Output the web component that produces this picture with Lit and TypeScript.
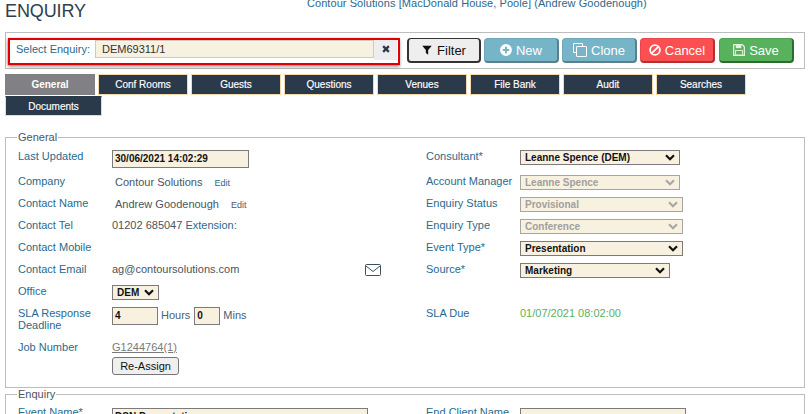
import { LitElement, html, css, svg } from "lit";
import { customElement } from "lit/decorators.js";

const tabs = ["Conf Rooms", "Guests", "Questions", "Venues", "File Bank", "Audit", "Searches"];

function chev(c: string) {
  return svg`<svg class="chev" width="10" height="7" viewBox="0 0 10 7"><path d="M1 1.2L5 5.2 9 1.2" fill="none" stroke="${c}" stroke-width="2.2"/></svg>`;
}

const leftRows = [
  { h: 25, label: "Last Updated", v: html`<span class="inp dt">30/06/2021 14:02:29</span>` },
  { h: 22, label: "Company", v: html`<span class="val in2">Contour Solutions</span><a class="edit e1">Edit</a>` },
  { h: 22, label: "Contact Name", v: html`<span class="val in2">Andrew Goodenough</span><a class="edit e2">Edit</a>` },
  { h: 22, label: "Contact Tel", v: html`<span class="val">01202 685047 <span class="ext">Extension:</span></span>` },
  { h: 22, label: "Contact Mobile", v: html`` },
  {
    h: 22,
    label: "Contact Email",
    v: html`<span class="val">ag@contoursolutions.com</span><svg class="mail" width="16" height="12" viewBox="0 0 16 12"><rect x=".5" y=".5" width="15" height="11" rx="1" fill="none" stroke="#3d4f63"/><path d="M1 2l7 5.5L15 2" fill="none" stroke="#3d4f63"/></svg>`,
  },
  { h: 22, label: "Office", v: html`<span class="sel office">DEM${chev("#111")}</span>` },
];

const rightRows = [
  { h: 25, label: "Consultant*", cls: "w160", text: "Leanne Spence (DEM)" },
  { h: 22, label: "Account Manager", cls: "w160 off", text: "Leanne Spence" },
  { h: 22, label: "Enquiry Status", cls: "w163 off", text: "Provisional" },
  { h: 22, label: "Enquiry Type", cls: "w163 off", text: "Conference" },
  { h: 22, label: "Event Type*", cls: "w163", text: "Presentation" },
  { h: 22, label: "Source*", cls: "w150", text: "Marketing" },
];

@customElement("app-root")
export class AppRoot extends LitElement {
  static styles = css`
    :host {
      display: block;
      width: 809px;
      height: 414px;
      overflow: hidden;
      background: #fff;
      font-family: "Liberation Sans", Arial, sans-serif;
      font-size: 11px;
      color: #2a6a8c;
    }
    .head { display: flex; height: 32px; padding-left: 5px; }
    h1 { margin: 0; padding-top: 1px; font-size: 18px; font-weight: 400; line-height: 21px; color: #2e3e4e; width: 302px; letter-spacing: -0.1px; }
    .org { font-size: 11px; line-height: 6px; color: #2a6a8c; letter-spacing: 0.065px; white-space: nowrap; }
    .bar {
      margin: 0 4px 0 5px;
      height: 37px;
      box-sizing: border-box;
      border: 1px solid #bdbdbd;
      display: flex;
      align-items: flex-start;
      padding: 5px 0 0 2px;
    }
    .search {
      box-sizing: border-box;
      width: 392px;
      height: 27px;
      border: 2px solid #e00000;
      box-shadow: 0 2px 3px rgba(0, 0, 0, 0.35), -1px 0 2px rgba(0, 0, 0, 0.2);
      display: flex;
      align-items: flex-start;
      padding-left: 6px;
      margin-right: 7px;
      background: #fff;
    }
    .search label { width: 79px; flex: none; font-size: 11px; line-height: 18px; white-space: nowrap; }
    .search .txt {
      box-sizing: border-box;
      width: 279px;
      height: 18px;
      background: #f7f1e1;
      border: 1px solid #cfcabb;
      padding-left: 6px;
      font-size: 11px;
      line-height: 16px;
      color: #333;
    }
    .search .clr {
      width: 23px;
      height: 20px;
      background: #eee;
      display: flex;
      align-items: center;
      justify-content: center;
      padding-bottom: 2px;
      box-sizing: border-box;
    }
    .btn {
      box-sizing: border-box;
      width: 75px;
      height: 25px;
      margin-right: 3px;
      border-radius: 4px;
      border: 1px solid;
      border-bottom-width: 2px;
      border-right-width: 2px;
      display: flex;
      align-items: center;
      justify-content: center;
      gap: 4px;
      font-size: 13px;
      color: #fff;
    }
    .filter { width: 74px; background: #eee; border-color: #333; color: #111; border-width: 1.5px 2px 2px 2px; gap: 5px; }
    .new, .clone { background: #76b5c8; border-color: #6da6b8 #5c7f8c #5c7f8c #6da6b8; }
    .cancel { background: #fb4f51; border-color: #e84547 #b32f30 #b32f30 #e84547; }
    .save { background: #58b15c; border-color: #4fa253 #2d6b30 #2d6b30 #4fa253; margin-left: 1px; }
    .tabs { display: flex; flex-wrap: wrap; gap: 1px 3px; margin: 5px 0 0 5px; width: 760px; }
    .tab {
      box-sizing: border-box;
      width: 90px;
      height: 21px;
      background: #2b3a4b;
      border: 1px solid #f5d9ae;
      color: #fff;
      font-size: 10px;
      display: flex;
      align-items: center;
      justify-content: center;
      -webkit-text-stroke: 0.15px #fff;
    }
    .tab.on { background: #808085; border-color: #808085; font-weight: 700; -webkit-text-stroke: 0; }
    .tab.docs { width: 97px; height: 20px; border-color: #2b3a4b #f5d9ae #f5d9ae; }
    fieldset {
      box-sizing: border-box;
      margin: 0 0 0 5px;
      width: 800px;
      border: 1px solid #bdbdbd;
      padding: 0 12px;
      min-width: 0;
    }
    legend { padding: 0 1px; font-size: 11px; font-weight: 400; line-height: 12px; color: #4a5560; margin-left: -1px; }
    .general { margin-top: 15px; height: 257px; }
    .general .cols { padding-top: 6px; }
    .enquiry { height: 60px; }
    .enquiry .cols { padding-top: 5px; }
    .cols { display: flex; }
    .col { box-sizing: border-box; width: 408px; flex: none; }
    .row { display: flex; }
    .lab { width: 94px; flex: none; line-height: 13px; padding-top: 1px; white-space: nowrap; }
    .cell { display: flex; align-items: flex-start; flex: 1; }
    .val { color: #4a5560; line-height: 13px; padding-top: 1px; white-space: nowrap; }
    .ext { color: #2a6a8c; }
    .val.in2 { margin: 2px 0 0 3px; padding-top: 0; }
    .edit { font-size: 9px; line-height: 12px; margin: 3px 0 0 12px; color: #2a6a8c; }
    .edit.e2 { color: #5a5570; }
    .mail { margin: 2px 0 0 126px; }
    .inp {
      box-sizing: border-box;
      display: inline-block;
      background: #f8f1e0;
      border: 1px solid #7b7b7b;
      font-weight: 700;
      font-size: 10px;
      color: #111;
      padding-left: 2px;
    }
    .dt { width: 137px; height: 18px; line-height: 16px; margin-top: 1px; }
    .sel {
      box-sizing: border-box;
      display: flex;
      align-items: center;
      justify-content: space-between;
      height: 15px;
      margin-top: 1px;
      background: #f8f1e0;
      border: 1px solid #7b7b7b;
      font-weight: 700;
      font-size: 10px;
      color: #111;
      padding: 0 4px 0 4px;
      white-space: nowrap;
    }
    .sel.off { border-color: #a5a5a5; color: #a0a0a0; }
    .office { width: 47px; }
    .w160 { width: 160px; }
    .w163 { width: 163px; }
    .w150 { width: 150px; }
    .sla { height: 34px; }
    .sla .lab { white-space: normal; line-height: 12px; }
    .num { height: 18px; line-height: 16px; margin-top: 1px; }
    .n4 { width: 46px; }
    .n0 { width: 26px; }
    .unit { color: #4a5f70; line-height: 13px; margin: 3px 4px 0 3px; }
    .job { height: 41px; }
    .jobv { display: flex; flex-direction: column; align-items: flex-start; }
    .joblink { color: #7a7a7a; line-height: 12px; text-decoration: underline; margin-top: 1px; }
    .reassign {
      box-sizing: border-box;
      width: 67px;
      height: 18px;
      margin-top: 4px;
      background: #efefef;
      border: 1px solid #767676;
      border-radius: 3px;
      font-size: 11px;
      line-height: 16px;
      text-align: center;
      color: #111;
    }
    .due { color: #5cb05f; line-height: 13px; padding-top: 1px; }
    .gapR { height: 22px; }
    .slaR { height: 34px; }
    .ebox {
      box-sizing: border-box;
      height: 18px;
      margin-top: 3px;
      background: #f8f1e0;
      border: 1px solid #7b7b7b;
      font-size: 10px;
      font-weight: 700;
      color: #111;
      padding-left: 2px;
      line-height: 16px;
      white-space: nowrap;
      overflow: hidden;
    }
    .ev { width: 256px; }
    .ec { width: 166px; }
  `;

  render() {
    return html`
      <div class="head">
        <h1>ENQUIRY</h1>
        <div class="org">Contour Solutions [MacDonald House, Poole] (Andrew Goodenough)</div>
      </div>
      <div class="bar">
        <div class="search">
          <label>Select Enquiry:</label>
          <div class="txt">DEM69311/1</div>
          <div class="clr">
            <svg width="8" height="8" viewBox="0 0 9 9"><path d="M1.3 1.3l6.4 6.4M7.7 1.3L1.3 7.7" stroke="#2b3a4b" stroke-width="2.6"/></svg>
          </div>
        </div>
        <div class="btn filter">
          <svg width="10" height="10" viewBox="0 0 12 12"><path d="M.3 .8h11.4L7.4 6v5.7L4.6 9.6V6z" fill="#111"/></svg>Filter
        </div>
        <div class="btn new">
          <svg width="12" height="12" viewBox="0 0 13 13"><circle cx="6.5" cy="6.5" r="6.4" fill="#fff"/><path d="M6.5 3v7M3 6.5h7" stroke="#76b5c8" stroke-width="2.2"/></svg>New
        </div>
        <div class="btn clone">
          <svg width="14" height="14" viewBox="0 0 14 14" fill="none" stroke="#fff"><path d="M9.5 3.5v-3h-9v9h3"/><rect x="3.5" y="3.5" width="10" height="10" rx=".5"/></svg>Clone
        </div>
        <div class="btn cancel">
          <svg width="12" height="12" viewBox="0 0 13 13" fill="none" stroke="#fff" stroke-width="2"><circle cx="6.5" cy="6.5" r="5.3"/><path d="M2.8 10.2l7.4-7.4"/></svg>Cancel
        </div>
        <div class="btn save">
          <svg width="12" height="12" viewBox="0 0 13 13"><path d="M1 .7h9l2.3 2.3v9.3H.7V1z" fill="none" stroke="#e3f2d8" stroke-width="1.4"/><rect x="3" y="1" width="6" height="3.5" fill="#e3f2d8"/><rect x="2.8" y="7" width="7.4" height="5" fill="none" stroke="#e3f2d8"/></svg>Save
        </div>
      </div>
      <div class="tabs">
        <div class="tab on">General</div>
        ${tabs.map((t) => html`<div class="tab">${t}</div>`)}
        <div class="tab docs">Documents</div>
      </div>
      <fieldset class="general">
        <legend>General</legend>
        <div class="cols">
          <div class="col">
            ${leftRows.map(
              (r) => html`<div class="row" style="height:${r.h}px">
                <div class="lab">${r.label}</div>
                <div class="cell">${r.v}</div>
              </div>`
            )}
            <div class="row sla">
              <div class="lab">SLA Response Deadline</div>
              <div class="cell">
                <span class="inp num n4">4</span><span class="unit">Hours</span><span class="inp num n0">0</span><span class="unit">Mins</span>
              </div>
            </div>
            <div class="row job">
              <div class="lab">Job Number</div>
              <div class="jobv">
                <a class="joblink">G1244764(1)</a>
                <div class="reassign">Re-Assign</div>
              </div>
            </div>
          </div>
          <div class="col">
            ${rightRows.map(
              (r) => html`<div class="row" style="height:${r.h}px">
                <div class="lab">${r.label}</div>
                <div class="cell"><span class="sel ${r.cls}">${r.text}${chev(r.cls.includes("off") ? "#a8a8a8" : "#111")}</span></div>
              </div>`
            )}
            <div class="gapR"></div>
            <div class="row slaR">
              <div class="lab">SLA Due</div>
              <div class="cell"><span class="due">01/07/2021 08:02:00</span></div>
            </div>
          </div>
        </div>
      </fieldset>
      <fieldset class="enquiry">
        <legend>Enquiry</legend>
        <div class="cols">
          <div class="col">
            <div class="row">
              <div class="lab">Event Name*</div>
              <div class="ebox ev">DSN Presentation</div>
            </div>
          </div>
          <div class="col">
            <div class="row">
              <div class="lab">End Client Name</div>
              <div class="ebox ec"></div>
            </div>
          </div>
        </div>
      </fieldset>
    `;
  }
}
